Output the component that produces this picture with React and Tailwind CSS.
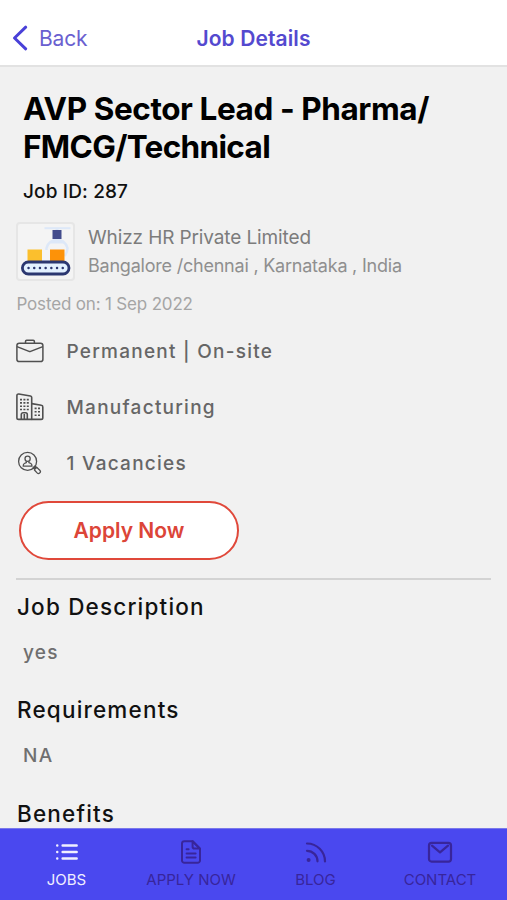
import React from 'react';

const facts = [
    { icon: BriefcaseIcon, label: 'Permanent | On-site' },
    { icon: BuildingsIcon, label: 'Manufacturing' },
    { icon: VacancyIcon, label: '1 Vacancies' },
];

const sections = [
    { title: 'Job Description', body: 'yes' },
    { title: 'Requirements', body: 'NA' },
    { title: 'Benefits', body: '' },
];

const tabs = [
    { label: 'JOBS', icon: ListIcon, active: true },
    { label: 'APPLY NOW', icon: DocumentIcon },
    { label: 'BLOG', icon: FeedIcon },
    { label: 'CONTACT', icon: MailIcon },
];

function BriefcaseIcon() {
    return (
        <svg width="28" height="24" viewBox="0 0 28 24" fill="none" stroke="currentColor" strokeWidth="1.5" strokeLinejoin="round">
            <rect x="0.9" y="4.2" width="26" height="18.4" rx="2.4" />
            <path d="M9.5 4.2V2.4a1.2 1.2 0 0 1 1.2-1.2h6.5a1.2 1.2 0 0 1 1.2 1.2v1.8" />
            <path d="M1 7.6l12 4.8a2 2 0 0 0 1.6 0L26.8 7.6" />
        </svg>
    );
}

function BuildingsIcon() {
    return (
        <svg width="28" height="28" viewBox="0 0 28 28" fill="none" stroke="currentColor" strokeWidth="1.6" strokeLinejoin="round">
            <path d="M2.6 26.4a1.7 1.7 0 0 1-1.7-1.7V2.6A1.6 1.6 0 0 1 2.8 1l11.6 2a1.6 1.6 0 0 1 1.3 1.6v21.8z" />
            <path d="M15.7 10.6l9.7 1.7a1.6 1.6 0 0 1 1.4 1.6v10.8a1.7 1.7 0 0 1-1.7 1.7h-9.4" />
            <path d="M5.3 26.4v-5a1.7 1.7 0 0 1 1.7-1.7h2.6a1.7 1.7 0 0 1 1.7 1.7v5M8.3 21v5" />
            <path d="M4 6.6h2M7.4 6.6h2M10.8 6.6h2M4 9.9h2M7.4 9.9h2M10.8 9.9h2M4 13.2h2M7.4 13.2h2M10.8 13.2h2M4 16.5h2M7.4 16.5h2M10.8 16.5h2M18.6 15.4h2M22 15.4h2M18.6 18.8h2M22 18.8h2M18.6 22.2h2M22 22.2h2" />
        </svg>
    );
}

function VacancyIcon() {
    return (
        <svg width="28" height="24" viewBox="0 0 28 24" fill="none" stroke="currentColor" strokeWidth="1.3" strokeLinejoin="round">
            <circle cx="11.6" cy="10.4" r="9" />
            <circle cx="11.6" cy="7.8" r="2.6" />
            <path d="M10.3 10.3v1.4l-2 .8c-.8.4-1.1 1.6-1.1 2.7h8.8c0-1.1-.3-2.3-1.1-2.7l-2-.8v-1.4" />
            <path d="M17.1 16.8l1.9-1.9 1.6 1.6-1.9 1.9z" fill="currentColor" />
            <path d="M20.6 16.3l3.2 2.9a1.9 1.9 0 0 1-2.7 2.7l-2.9-3.2" />
        </svg>
    );
}

function ListIcon() {
    return (
        <svg width="24" height="24" viewBox="0 0 24 24" fill="none" stroke="currentColor" strokeWidth="2.4" strokeLinecap="round">
            <path d="M7.6 5.5h14.1M7.6 12h14.1M7.6 18.5h14.1M2.2 5.5h.1M2.2 12h.1M2.2 18.5h.1" />
        </svg>
    );
}

function DocumentIcon() {
    return (
        <svg width="24" height="24" viewBox="0 0 24 24" fill="none" stroke="currentColor" strokeWidth="2" strokeLinecap="round" strokeLinejoin="round">
            <path d="M13.6 1.2H5.4A2.4 2.4 0 0 0 3 3.6v16.8a2.4 2.4 0 0 0 2.4 2.4h13.2a2.4 2.4 0 0 0 2.4-2.4V8.6z" />
            <path d="M13.6 1.2v5.6a1.8 1.8 0 0 0 1.8 1.8H21zM7.6 9.2h2M7.6 13.6h9M7.6 17.6h9" />
        </svg>
    );
}

function FeedIcon() {
    return (
        <svg width="24" height="24" viewBox="0 0 24 24" fill="none" stroke="currentColor" strokeWidth="2.2" strokeLinecap="round">
            <path d="M3 3.5a18 18 0 0 1 18 18M3 10.8A10.5 10.5 0 0 1 13.5 21.3" />
            <circle cx="4.6" cy="20" r="2" fill="currentColor" stroke="none" />
        </svg>
    );
}

function MailIcon() {
    return (
        <svg width="26" height="24" viewBox="0 0 26 24" fill="none" stroke="currentColor" strokeWidth="2.2" strokeLinecap="round" strokeLinejoin="round">
            <rect x="2" y="2.8" width="22" height="18.8" rx="2.6" />
            <path d="M5 5.6l8 6.8 8-6.8" />
        </svg>
    );
}

// Conveyor belt artwork used as the company logo
function CompanyLogo() {
    return (
        <svg width="52" height="52" viewBox="0 0 52 52" fill="none">
            <path d="M24.5 3.2h26" stroke="#dde8f8" strokeWidth="2" />
            <path d="M37 3v4M31 17h13" stroke="#dde8f8" strokeWidth="3" />
            <path d="M26.5 25v-2a10.8 10.8 0 0 1 21 0c0 4-1.5 6-3 8" stroke="#dde8f8" strokeWidth="2.5" />
            <rect x="32.5" y="5" width="9" height="9" fill="#434c8c" />
            <rect x="7.5" y="24.5" width="14.5" height="13" fill="#fbbf2d" />
            <rect x="30" y="24.5" width="14.5" height="13" fill="#fd9208" />
            <rect x="2.4" y="37" width="46.6" height="12" rx="6" fill="#e3f1ff" stroke="#2b3770" strokeWidth="2.8" />
            <path d="M8.5 43h36" stroke="#2b3770" strokeWidth="2.4" strokeLinecap="round" strokeDasharray="0.1 5.6" />
        </svg>
    );
}

export default function App() {
    return (
        <div className="flex h-[900px] w-full flex-col overflow-hidden bg-[#f1f1f1] font-['Inter','Liberation_Sans',sans-serif]">
            {/* Header */}
            <header className="grid h-[67px] shrink-0 grid-cols-[1fr_auto_1fr] items-center border-b-2 border-[#e2e2e2] bg-white px-3 pt-[11px] text-[#5449cf]">
                <button className="flex items-center">
                    <svg width="16" height="26" viewBox="0 0 16 26" fill="none" stroke="#4940d8" strokeWidth="3" strokeLinecap="round" strokeLinejoin="round">
                        <path d="M13.7 2.2L2.5 13l11.2 10.8" />
                    </svg>
                    <span className="mt-px ml-[11px] text-[21px] tracking-[-0.2px] text-[#6a60d0]">Back</span>
                </button>
                <h1 className="mt-px text-[21px] font-semibold tracking-[0.1px]">Job Details</h1>
            </header>

            <main className="min-h-0 flex-1 overflow-hidden px-4">
                <div className="pt-[23px] pl-[7px]">
                    <h2 className="text-[31.5px] leading-[38px] font-bold tracking-[-0.42px] whitespace-nowrap text-black">
                        AVP Sector Lead - Pharma/
                        <br />
                        <span className="tracking-[-0.66px]">FMCG/Technical</span>
                    </h2>
                    <p className="mt-[14px] text-[19px] leading-6 font-medium tracking-[0.15px] text-[#111]">Job ID: 287</p>
                </div>

                {/* Company */}
                <div className="mt-[18px] flex h-[58px] items-center">
                    <div className="flex size-[59px] shrink-0 items-center justify-center rounded-[4px] border-2 border-[#e6e6e6] bg-[#f4f4f4]">
                        <CompanyLogo />
                    </div>
                    <div className="ml-[13px] whitespace-nowrap">
                        <p className="pt-px text-[19px] leading-[29px] tracking-[-0.12px] text-[#7c7c7c]">Whizz HR Private Limited</p>
                        <p className="text-[18px] leading-[28px] tracking-[-0.22px] text-[#8f8f8f]">Bangalore /chennai , Karnataka , India</p>
                    </div>
                </div>
                <p className="mt-[12px] ml-[0.5px] text-[17px] leading-6 tracking-[-0.17px] text-[#a5a5a5]">Posted on: 1 Sep 2022</p>

                <ul className="mt-[7px]">
                    {facts.map(({ icon: Icon, label }) => (
                        <li key={label} className="flex h-14 items-center text-[#505050]">
                            <Icon />
                            <span className="mt-[2px] ml-[22.5px] text-[19px] font-medium tracking-[1.25px] text-[#666]">{label}</span>
                        </li>
                    ))}
                </ul>

                <button className="mt-[10px] ml-[3px] flex h-[59px] w-[220px] items-center justify-center rounded-full border-[2.5px] border-[#e0483a] bg-white text-[21px] font-semibold text-[#dc4538]">
                    Apply Now
                </button>
                <hr className="mt-[18px] border-t-2 border-[#d3d3d3]" />

                {sections.map(({ title, body }) => (
                    <section key={title} className="h-[103.4px] pt-[11px]">
                        <h3 className="ml-px text-[22.5px] leading-8 font-medium tracking-[1.18px] text-[#111]">{title}</h3>
                        <p className="mt-[18px] ml-[7px] text-[19px] leading-6 font-medium tracking-[1.3px] text-[#6f6f6f]">{body}</p>
                    </section>
                ))}
            </main>

            {/* Bottom tabs */}
            <nav className="grid h-[72px] shrink-0 grid-cols-[133px_116px_133px_116px] border-t border-[#7a78ea] bg-[#4a48ef]">
                {tabs.map(({ label, icon: Icon, active }) => (
                    <a key={label} className={`flex flex-col items-center pt-[11px] ${active ? 'text-[#f0efff]' : 'text-[#38259b]'}`}>
                        <Icon />
                        <span className="mt-[6px] text-[15px] leading-5 whitespace-nowrap">{label}</span>
                    </a>
                ))}
            </nav>
        </div>
    );
}
